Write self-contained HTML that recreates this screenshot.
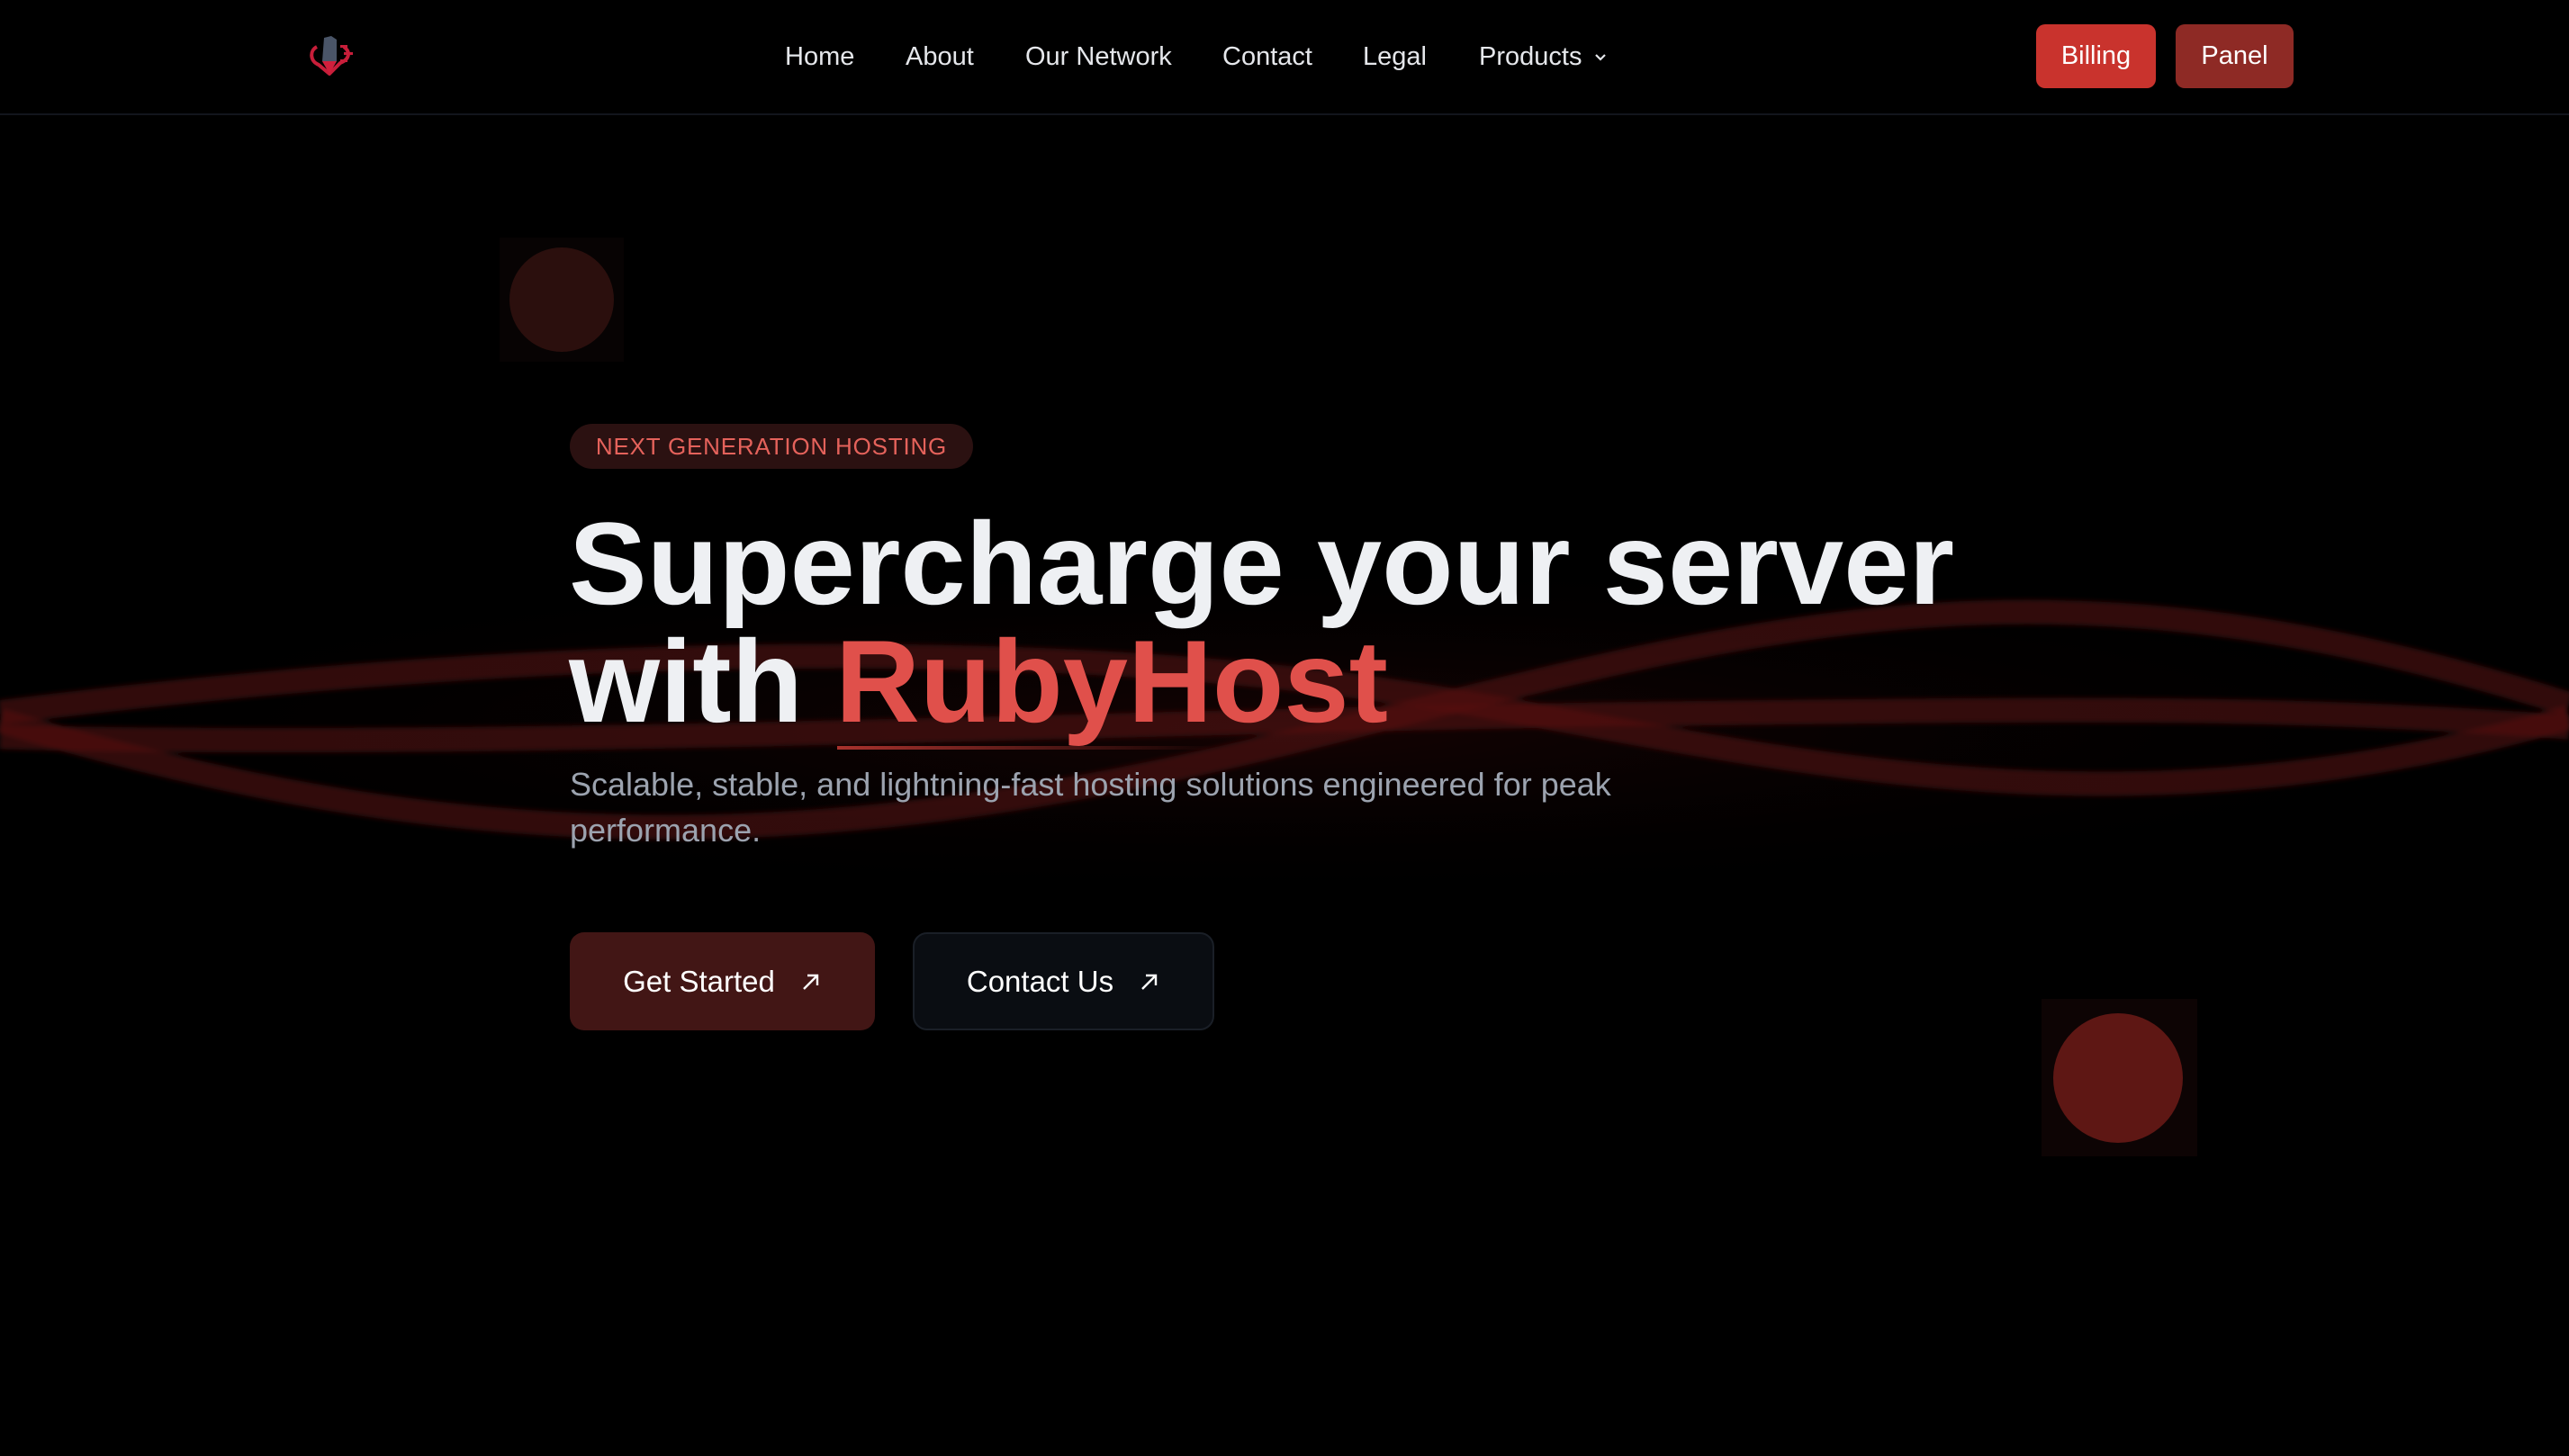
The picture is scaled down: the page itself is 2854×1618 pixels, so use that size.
<!DOCTYPE html>
<html><head><meta charset="utf-8"><style>
*{margin:0;padding:0;box-sizing:border-box}
html,body{width:2854px;height:1618px;background:#000;overflow:hidden;font-family:"Liberation Sans",Arial,sans-serif}
.nav{position:absolute;left:0;top:0;width:2854px;height:128px;border-bottom:2px solid #12151c}
.nav a{position:absolute;top:47px;color:#e5e7eb;font-size:29px;text-decoration:none}
.btn{position:absolute;top:27px;height:71px;border-radius:10px;color:#fff;font-size:29px;display:flex;align-items:center;justify-content:center}
.abs{position:absolute}
</style></head><body>
<svg class="abs" style="left:0;top:0" width="2854" height="1618" viewBox="0 0 1568 889" preserveAspectRatio="none">
<defs><filter id="b"><feGaussianBlur stdDeviation="1.5"/></filter>
<radialGradient id="g" cx="0.5" cy="0.5" r="0.5"><stop offset="0" stop-color="#2a0606" stop-opacity="0.5"/><stop offset="1" stop-color="#000" stop-opacity="0"/></radialGradient></defs>
<ellipse cx="780" cy="445" rx="820" ry="110" fill="url(#g)"/>
<g fill="none" stroke="#5a1412" stroke-opacity="0.55" stroke-width="15" filter="url(#b)">
<path d="M0,440 C300,530 520,520 800,450 S1250,330 1568,430"/>
<path d="M0,435 C400,385 700,395 900,430 S1300,515 1568,438"/>
<path d="M0,450 C300,458 700,440 1000,436 S1400,432 1568,444"/>
</g>
</svg>
<div class="nav">
<svg class="abs" style="left:338px;top:38px" width="58" height="46" viewBox="0 0 58 46">
<path d="M22 4 L30 2 L36 6 L36 30 L28 44 L20 30 Z" fill="#4a5568"/>
<path d="M14 14 C6 18 6 30 16 34 L28 44 L40 32 C50 28 52 20 44 14" fill="none" stroke="#c81e3a" stroke-width="4"/>
<path d="M20 30 L36 30 L28 44 Z" fill="#d11f3c"/>
<rect x="40" y="12" width="8" height="3" fill="#c81e3a"/><rect x="44" y="20" width="10" height="3" fill="#c81e3a"/><rect x="40" y="28" width="8" height="3" fill="#c81e3a"/>
</svg>
<a style="left:872px">Home</a>
<a style="left:1006px">About</a>
<a style="left:1139px">Our Network</a>
<a style="left:1358px">Contact</a>
<a style="left:1514px">Legal</a>
<a style="left:1643px">Products</a>
<svg class="abs" style="left:1770px;top:58px" width="16" height="12" viewBox="0 0 16 12"><path d="M3 3 L8 8 L13 3" fill="none" stroke="#e5e7eb" stroke-width="2.2"/></svg>
<div class="btn" style="left:2262px;width:133px;background:#c9332d">Billing</div>
<div class="btn" style="left:2417px;width:131px;background:#8e2a25">Panel</div>
</div>
<div class="abs" style="left:555px;top:264px;width:138px;height:138px;background:#070303"></div>
<div class="abs" style="left:566px;top:275px;width:116px;height:116px;border-radius:50%;background:#2b0f0d"></div>
<div class="abs" style="left:2268px;top:1110px;width:173px;height:175px;background:#0d0404"></div>
<div class="abs" style="left:2281px;top:1126px;width:144px;height:144px;border-radius:50%;background:#5e1714"></div>
<div class="abs" style="left:633px;top:471px;width:448px;height:50px;border-radius:25px;background:#2b1111;color:#e4625b;font-size:26px;letter-spacing:0.8px;display:flex;align-items:center;justify-content:center">NEXT GENERATION HOSTING</div>
<div class="abs" style="left:632px;top:561px;font-size:130px;font-weight:bold;line-height:131px;color:#eef0f3;white-space:nowrap;letter-spacing:0px">Supercharge your server<br>with <span style="color:#e0504b">RubyHost</span></div>
<div class="abs" style="left:930px;top:829px;width:420px;height:4px;background:linear-gradient(90deg,#a8322d,rgba(168,50,45,0))"></div>
<div class="abs" style="left:633px;top:846px;width:1200px;font-size:36px;line-height:51px;color:#9ca3af">Scalable, stable, and lightning-fast hosting solutions engineered for peak performance.</div>
<div class="abs" style="left:633px;top:1036px;width:339px;height:109px;border-radius:16px;background:#421615;color:#fff;font-size:33px;display:flex;align-items:center;justify-content:center;gap:28px">Get Started <svg width="24" height="24" viewBox="0 0 24 24"><path d="M4 20 L19 5 M8 5 H19 V16" fill="none" stroke="#fff" stroke-width="2.4"/></svg></div>
<div class="abs" style="left:1014px;top:1036px;width:335px;height:109px;border-radius:16px;background:#0a0d12;border:2px solid #1a1f27;color:#fff;font-size:33px;display:flex;align-items:center;justify-content:center;gap:28px">Contact Us <svg width="24" height="24" viewBox="0 0 24 24"><path d="M4 20 L19 5 M8 5 H19 V16" fill="none" stroke="#fff" stroke-width="2.4"/></svg></div>
</body></html>
